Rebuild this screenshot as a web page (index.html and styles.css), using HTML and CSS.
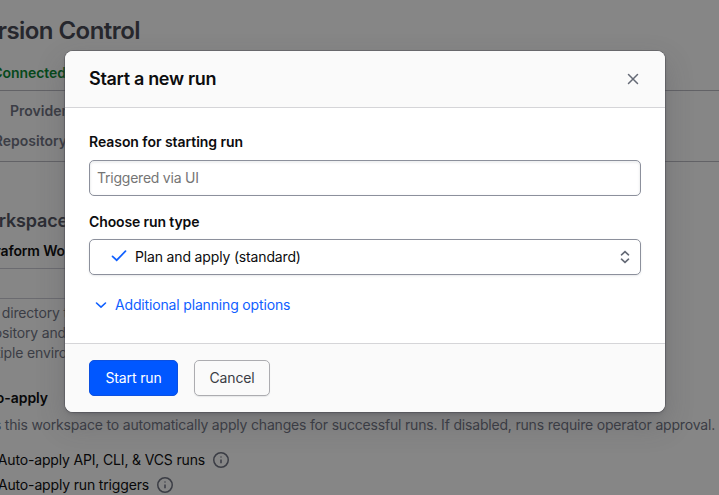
FILE: index.html
```html
<!DOCTYPE html>
<html lang="en">
<head>
<meta charset="utf-8">
<title>Version Control</title>
<link rel="stylesheet" href="styles.css">
</head>
<body>
<main class="page">
  <h1 class="row page-title"><span>Version Control</span></h1>
  <div class="row status"><span>Connected</span></div>
  <div class="details">
    <div class="row provider"><span>Provider</span></div>
    <div class="row repository"><span>Repository</span></div>
  </div>
  <h2 class="row section-title"><span>Workspace</span></h2>
  <div class="row directory-label"><span>Terraform Wo</span></div>
  <div class="directory-input"></div>
  <div class="help">
    <div class="row help-one"><span>The directory th</span></div>
    <div class="row help-two"><span>repository and</span></div>
    <div class="row help-three"><span>multiple enviro</span></div>
  </div>
  <h3 class="row apply-title"><span>Auto-apply</span></h3>
  <div class="row apply-help"><span>Allows this workspace to automatically apply changes for successful runs. If disabled, runs require operator approval.</span></div>
  <div class="option"><div class="row option-one"><span>Auto-apply API, CLI, &amp; VCS runs</span></div>
    <svg class="info" viewBox="0 0 16 16"><circle cx="8" cy="8" r="7.25"/><path d="M8 7.5v3.7M8 4.6v.9"/></svg></div>
  <div class="option"><div class="row option-two"><span>Auto-apply run triggers</span></div>
    <svg class="info" viewBox="0 0 16 16"><circle cx="8" cy="8" r="7.25"/><path d="M8 7.5v3.7M8 4.6v.9"/></svg></div>
</main>
<div class="overlay">
  <section class="modal" role="dialog">
    <header class="modal-header">
      <h2 class="modal-title"><span>Start a new run</span></h2>
      <svg class="close" viewBox="0 0 16 16"><path d="M3.5 3.5l9 9M12.5 3.5l-9 9"/></svg>
    </header>
    <div class="modal-body">
      <label class="label reason-label"><span>Reason for starting run</span></label>
      <div class="field reason"><span>Triggered via UI</span></div>
      <label class="label type-label"><span>Choose run type</span></label>
      <div class="field select">
        <svg class="check" viewBox="0 0 16 16"><path d="M1.5 8.3l4.2 3.9 8.8-9"/></svg>
        <span class="choice">Plan and apply (standard)</span>
        <svg class="caret" viewBox="0 0 16 16"><path d="M4.5 5.8L8 2.6l3.5 3.2M4.5 10.2L8 13.4l3.5-3.2"/></svg>
      </div>
      <div class="more">
        <svg class="chevron" viewBox="0 0 16 16"><path d="M3.5 6L8 10.2 12.5 6"/></svg>
        <span>Additional planning options</span>
      </div>
    </div>
    <footer class="modal-footer">
      <button class="button primary"><span>Start run</span></button>
      <button class="button secondary"><span>Cancel</span></button>
    </footer>
  </section>
</div>
</body>
</html>
```
FILE: styles.css
```css
* { box-sizing: border-box; }
body {
  margin: 0;
  height: 495px;
  overflow: hidden;
  background: #868686;
  font: 14px/20px Inter, "Liberation Sans", sans-serif;
  letter-spacing: -.16px;
  color: #3b3d45;
}
h1, h2, h3 { margin: 0; }
.page { height: 495px; overflow: hidden; }
.row { display: flex; justify-content: flex-end; white-space: nowrap; height: 20px; }
.row span { flex: none; }
.page-title { width: 140px; height: 32px; margin-top: 15px; font-size: 24px; line-height: 32px; font-weight: 600; color: #26272d; letter-spacing: -.55px; }
.status { width: 66px; margin-top: 16px; font-weight: 600; color: #07491b; letter-spacing: -.05px; }
.details { height: 72px; margin-top: 7px; padding-top: 10px; border-top: 1px solid #626266; border-bottom: 1px solid #626266; font-weight: 600; letter-spacing: 0; }
.provider { width: 67px; }
.repository { width: 67px; margin-top: 10px; }
.section-title { width: 68px; height: 24px; margin-top: 47px; font-size: 18px; line-height: 24px; font-weight: 600; color: #2c2d34; }
.directory-label { width: 65px; margin-top: 8px; font-weight: 600; color: #080809; letter-spacing: -.15px; }
.directory-input { height: 31px; width: 120px; margin-top: 7px; border-top: 1px solid #6b6b70; border-bottom: 1px solid #6b6b70; }
.help { margin-top: 4px; }
.help-one { width: 76px; }
.help-two { width: 66px; }
.help-three { width: 67px; }
.apply-title { width: 48px; margin-top: 25px; font-size: 14px; font-weight: 600; color: #080809; letter-spacing: -.05px; }
.apply-help { width: 715px; margin-top: 7px; letter-spacing: -.185px; }
.option { display: flex; align-items: center; height: 25px; gap: 8px; color: #080809; }
.apply-help + .option { margin-top: 12px; }
.option-one { width: 205px; }
.option-two { width: 149px; }
.info { width: 16px; height: 16px; fill: none; stroke: #3b3d45; stroke-width: 1.5; }
.overlay { position: absolute; inset: 0; padding: 51px 54px 0 65px; overflow: hidden; }
.modal { width: 600px; height: 361px; border-radius: 8px; overflow: hidden; background: #fff; box-shadow: 0 0 0 1px rgba(59,61,69,.35), 0 2px 3px rgba(59,61,69,.25), 0 12px 28px rgba(59,61,69,.25); }
.modal-header { display: flex; align-items: center; justify-content: space-between; height: 57px; padding: 0 24px; background: #fafafa; border-bottom: 1px solid #d5d5d8; }
.modal-title { font-size: 18px; line-height: 24px; font-weight: 600; color: #0c0c0e; letter-spacing: -.32px; }
.close { width: 16px; height: 16px; fill: none; stroke: #656a76; stroke-width: 1.5; stroke-linecap: round; }
.modal-body { height: 235px; padding: 24px 24px 0; }
.label { display: block; font-weight: 600; color: #0c0c0e; letter-spacing: -.05px; }
.type-label { letter-spacing: -.12px; }
.field { display: flex; align-items: center; height: 36px; border: 1px solid #8c909c; border-radius: 5px; margin-top: 8px; }
.reason { padding-left: 7px; color: #757575; letter-spacing: -.23px; box-shadow: inset 0 1px 2px 1px rgba(101,106,118,.1); }
.type-label { margin-top: 16px; }
.select { margin-top: 7px; padding: 0 7px 0 21px; color: #0c0c0e; box-shadow: 0 1px 2px rgba(101,106,118,.15); }
.check { width: 16px; height: 16px; margin-top: -2px; fill: none; stroke: #1060ff; stroke-width: 1.7; stroke-linecap: round; }
.choice { margin-left: 8px; }
.caret { width: 16px; height: 16px; margin-left: auto; fill: none; stroke: #656a76; stroke-width: 1.6; stroke-linecap: round; }
.more { display: flex; align-items: center; gap: 6px; margin-top: 20px; padding-left: 4px; color: #1060ff; }
.chevron { width: 16px; height: 16px; fill: none; stroke: #1060ff; stroke-width: 1.6; stroke-linecap: round; }
.modal-footer { display: flex; gap: 16px; height: 69px; padding: 16px 24px; background: #fafafa; border-top: 1px solid #d5d5d8; }
.button { height: 36px; padding: 0; border-radius: 5px; font: inherit; letter-spacing: -.14px; }
.primary { width: 89px; border: 1px solid #0c50e0; background: #0057ff; color: #fff; }
.secondary { width: 76px; border: 1px solid #acacb0; background: #fafafa; color: #3b3d45; box-shadow: 0 1px 1px rgba(101,106,118,.12); }
```
